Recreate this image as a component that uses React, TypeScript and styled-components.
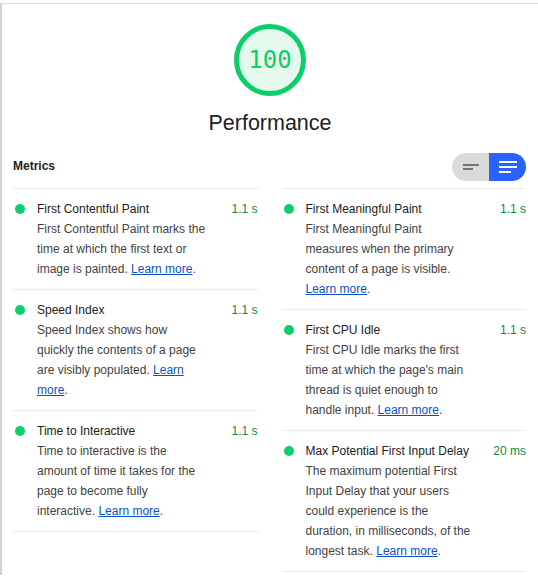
import React from "react";
import styled, { createGlobalStyle } from "styled-components";

const Global = createGlobalStyle`
  html, body { margin: 0; padding: 0; background: #fff; }
  body { font-family: "Liberation Sans", Arial, sans-serif; }
`;

const Page = styled.div`
  margin-top: 3px;
  border-top: 1px solid #dedede;
  border-left: 2px solid #d2d2d2;
  min-height: 572px;
  box-sizing: border-box;
`;

const GaugeSection = styled.section`
  display: flex;
  flex-direction: column;
  align-items: center;
  padding-top: 20px;
`;

const GaugeWrap = styled.div`
  position: relative;
  width: 72px;
  height: 72px;
`;

const GaugeValue = styled.div`
  position: absolute;
  inset: 0;
  display: flex;
  align-items: center;
  justify-content: center;
  font-family: "DejaVu Sans Mono", monospace;
  font-size: 24px;
  color: #0cce6b;
`;

const CategoryTitle = styled.h2`
  margin: 13px 0 0;
  font-family: "Liberation Sans", Arial, sans-serif;
  font-weight: 400;
  font-size: 21.5px;
  line-height: 28px;
  color: #212121;
`;

const Header = styled.div`
  display: flex;
  justify-content: space-between;
  align-items: flex-start;
  padding: 0 12px 0 11px;
  margin-top: 16px;
  margin-bottom: 7px;
`;

const HeaderTitle = styled.div`
  font-size: 12px;
  line-height: 26px;
  font-weight: 700;
  color: #212121;
`;

const Toggle = styled.div`
  display: flex;
  width: 74px;
  height: 28px;
  border-radius: 14px;
  overflow: hidden;
`;

const ToggleHalf = styled.div<{ $active?: boolean }>`
  flex: 1;
  display: flex;
  align-items: center;
  justify-content: center;
  background: ${(p) => (p.$active ? "#2962ff" : "#dadada")};
`;

const Columns = styled.div`
  display: grid;
  grid-template-columns: 1fr 1fr;
  column-gap: 24px;
  padding: 0 12px 0 11px;
`;

const MetricList = styled.div`
  border-top: 1px solid #ebebeb;
`;

const Row = styled.div`
  display: grid;
  grid-template-columns: 24px 169px 1fr;
  padding: 10px 0;
  border-bottom: 1px solid #ebebeb;
  font-size: 12px;
  line-height: 20px;
`;

const Dot = styled.span`
  grid-column: 1;
  grid-row: 1;
  width: 10px;
  height: 10px;
  margin: 5px 0 0 2px;
  border-radius: 50%;
  background: #0cce6b;
`;

const Title = styled.div`
  grid-column: 2;
  grid-row: 1;
  color: #212121;
  white-space: nowrap;
`;

const Value = styled.div`
  grid-column: 3;
  grid-row: 1;
  text-align: right;
  color: #0a8a4a;
  white-space: nowrap;
`;

const Description = styled.div`
  grid-column: 2;
  grid-row: 2;
  color: #424242;
`;

const Link = styled.a`
  color: #0c50c7;
  text-decoration: underline;
`;

type Metric = { title: string; value: string; desc: string };

const left: Metric[] = [
  {
    title: "First Contentful Paint",
    value: "1.1\u00a0s",
    desc: "First Contentful Paint marks the time at which the first text or image is painted.",
  },
  {
    title: "Speed Index",
    value: "1.1\u00a0s",
    desc: "Speed Index shows how quickly the contents of a page are visibly populated.",
  },
  {
    title: "Time to Interactive",
    value: "1.1\u00a0s",
    desc: "Time to interactive is the amount of time it takes for the page to become fully interactive.",
  },
];

const right: Metric[] = [
  {
    title: "First Meaningful Paint",
    value: "1.1\u00a0s",
    desc: "First Meaningful Paint measures when the primary content of a page is visible.",
  },
  {
    title: "First CPU Idle",
    value: "1.1\u00a0s",
    desc: "First CPU Idle marks the first time at which the page's main thread is quiet enough to handle input.",
  },
  {
    title: "Max Potential First Input Delay",
    value: "20\u00a0ms",
    desc: "The maximum potential First Input Delay that your users could experience is the duration, in milliseconds, of the longest task.",
  },
];

function MetricRow({ m }: { m: Metric }) {
  return (
    <Row>
      <Dot />
      <Title>{m.title}</Title>
      <Value>{m.value}</Value>
      <Description>
        {m.desc} <Link href="#">Learn more</Link>.
      </Description>
    </Row>
  );
}

export default function App() {
  return (
    <>
      <Global />
      <Page>
        <GaugeSection>
          <GaugeWrap>
            <svg width="72" height="72" viewBox="0 0 72 72">
              <circle cx="36" cy="36" r="33.5" fill="#e5f8ee" stroke="#0cce6b" strokeWidth="5" />
            </svg>
            <GaugeValue>100</GaugeValue>
          </GaugeWrap>
          <CategoryTitle>Performance</CategoryTitle>
        </GaugeSection>
        <Header>
          <HeaderTitle>Metrics</HeaderTitle>
          <Toggle>
            <ToggleHalf>
              <svg width="16" height="8" viewBox="0 0 16 8">
                <rect x="0" y="1" width="16" height="2" fill="#757575" />
                <rect x="0" y="5" width="10" height="2" fill="#757575" />
              </svg>
            </ToggleHalf>
            <ToggleHalf $active>
              <svg width="18" height="12" viewBox="0 0 18 12">
                <rect x="0" y="0" width="18" height="2" fill="#fff" />
                <rect x="0" y="5" width="18" height="2" fill="#fff" />
                <rect x="0" y="10" width="12" height="2" fill="#fff" />
              </svg>
            </ToggleHalf>
          </Toggle>
        </Header>
        <Columns>
          <MetricList>
            {left.map((m) => (
              <MetricRow key={m.title} m={m} />
            ))}
          </MetricList>
          <MetricList>
            {right.map((m) => (
              <MetricRow key={m.title} m={m} />
            ))}
          </MetricList>
        </Columns>
      </Page>
    </>
  );
}
